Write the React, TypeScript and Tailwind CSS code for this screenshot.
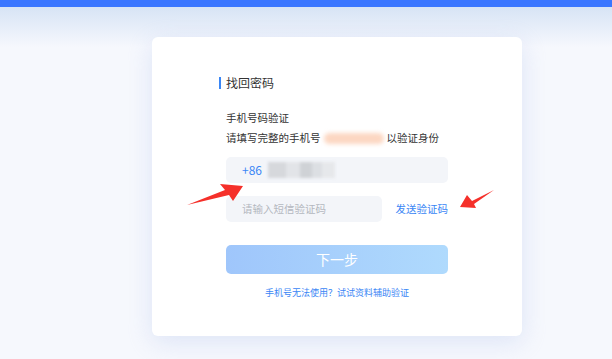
export default function App() {
  return (
    <div
      className="relative h-[359px] w-[612px] overflow-hidden bg-[#f6f8fd]"
      style={{ fontFamily: '"Noto Sans CJK SC", "Noto Sans", sans-serif' }}
    >
      <div className="h-[7px] bg-[#3a76ff]" />
      <div className="h-[40px] bg-gradient-to-b from-[#d7e4f5] to-[#f6f8fd]" />

      <div className="absolute left-[152px] top-[37px] h-[299px] w-[370px] rounded-[6px] bg-white px-[74px] pt-[37px] shadow-[0_6px_24px_rgba(190,205,240,0.45)]">
        <div className="-ml-[7px] flex items-center gap-[5px]">
          <span className="h-[12px] w-[2px] bg-[#3a86f5]" />
          <span className="text-[12px] leading-[18px] text-[#333]">找回密码</span>
        </div>

        <div className="mt-[16px] text-[10.5px] leading-[20px] text-[#333]">
          <div>手机号码验证</div>
          <div className="flex items-center">
            <span>请填写完整的手机号</span>
            <span className="mx-[3px] h-[11px] w-[60px] rounded-full bg-[#fcd7c2] blur-[2px]" />
            <span>以验证身份</span>
          </div>
        </div>

        <div className="mt-[9px] flex h-[26px] items-center rounded-[5px] bg-[#f3f5f9] px-[16px]">
          <span className="text-[12px] text-[#3a86f5]">+86</span>
          <span className="ml-[6px] flex h-[16px] w-[67px] blur-[1.5px]">
            <span className="w-[18px] bg-[#d6d8dc]" />
            <span className="w-[14px] bg-[#e2e4e8]" />
            <span className="w-[12px] bg-[#cfd2d6]" />
            <span className="w-[10px] bg-[#dcdfe3]" />
            <span className="w-[13px] bg-[#e6e8eb]" />
          </span>
        </div>

        <div className="mt-[13px] flex items-center justify-between">
          <div className="flex h-[26px] w-[156px] items-center rounded-[5px] bg-[#f3f5f9] px-[16px] text-[10.5px] text-[#b4b8bf]">
            请输入短信验证码
          </div>
          <span className="text-[10.5px] text-[#3a86f5]">发送验证码</span>
        </div>

        <button className="mt-[23px] flex h-[29px] w-full items-center justify-center rounded-[5px] bg-gradient-to-r from-[#9fc6fb] to-[#afdafd] text-[14px] text-white">
          下一步
        </button>

        <div className="mt-[12px] text-center text-[9px] text-[#3a86f5]">手机号无法使用？试试资料辅助验证</div>
      </div>

      <svg className="absolute left-0 top-0" width="612" height="359">
        <polygon points="187,205 225,190 220,184 243,186 233,201 229,195" fill="#f5302a" />
        <polygon points="494,190 472,201 467,195 460,207 476,208 474,204" fill="#f5302a" />
      </svg>
    </div>
  )
}
